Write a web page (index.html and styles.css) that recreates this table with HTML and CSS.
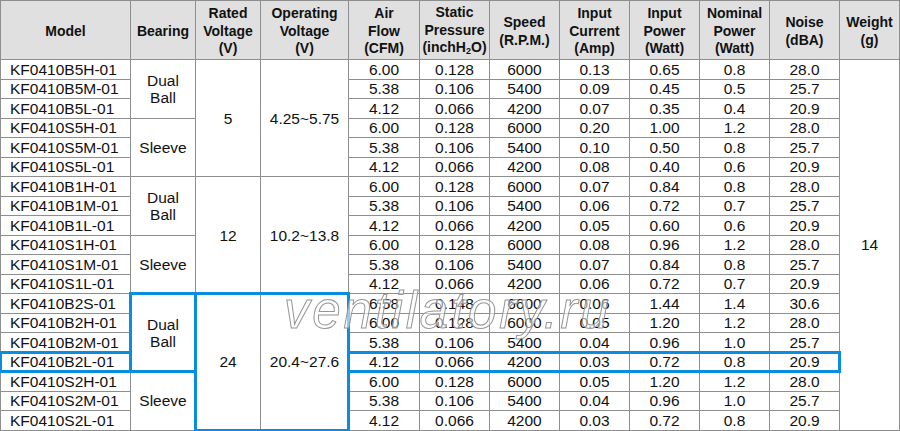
FILE: index.html
```html
<!DOCTYPE html>
<html>
<head>
<meta charset="utf-8">
<link rel="stylesheet" href="styles.css">
</head>
<body>
<div class="sheet">
  <div class="h"><span>Model</span></div>
  <div class="h"><span>Bearing</span></div>
  <div class="h"><span>Rated<br>Voltage<br>(V)</span></div>
  <div class="h"><span>Operating<br>Voltage<br>(V)</span></div>
  <div class="h"><span>Air<br>Flow<br>(CFM)</span></div>
  <div class="h"><span>Static<br>Pressure<br>(inchH<span class="sub">2</span>O)</span></div>
  <div class="h"><span>Speed<br>(R.P.M.)</span></div>
  <div class="h"><span>Input<br>Current<br>(Amp)</span></div>
  <div class="h"><span>Input<br>Power<br>(Watt)</span></div>
  <div class="h"><span>Nominal<br>Power<br>(Watt)</span></div>
  <div class="h"><span>Noise<br>(dBA)</span></div>
  <div class="h"><span>Weight<br>(g)</span></div>

  <div class="c m">KF0410B5H-01</div><div class="c s3"><span>Dual<br>Ball</span></div><div class="c s6">5</div><div class="c s6">4.25~5.75</div><div class="c">6.00</div><div class="c">0.128</div><div class="c">6000</div><div class="c">0.13</div><div class="c">0.65</div><div class="c">0.8</div><div class="c">28.0</div><div class="c s19">14</div>
  <div class="c m">KF0410B5M-01</div><div class="c">5.38</div><div class="c">0.106</div><div class="c">5400</div><div class="c">0.09</div><div class="c">0.45</div><div class="c">0.5</div><div class="c">25.7</div>
  <div class="c m">KF0410B5L-01</div><div class="c">4.12</div><div class="c">0.066</div><div class="c">4200</div><div class="c">0.07</div><div class="c">0.35</div><div class="c">0.4</div><div class="c">20.9</div>
  <div class="c m">KF0410S5H-01</div><div class="c s3">Sleeve</div><div class="c">6.00</div><div class="c">0.128</div><div class="c">6000</div><div class="c">0.20</div><div class="c">1.00</div><div class="c">1.2</div><div class="c">28.0</div>
  <div class="c m">KF0410S5M-01</div><div class="c">5.38</div><div class="c">0.106</div><div class="c">5400</div><div class="c">0.10</div><div class="c">0.50</div><div class="c">0.8</div><div class="c">25.7</div>
  <div class="c m">KF0410S5L-01</div><div class="c">4.12</div><div class="c">0.066</div><div class="c">4200</div><div class="c">0.08</div><div class="c">0.40</div><div class="c">0.6</div><div class="c">20.9</div>

  <div class="c m">KF0410B1H-01</div><div class="c s3"><span>Dual<br>Ball</span></div><div class="c s6">12</div><div class="c s6">10.2~13.8</div><div class="c">6.00</div><div class="c">0.128</div><div class="c">6000</div><div class="c">0.07</div><div class="c">0.84</div><div class="c">0.8</div><div class="c">28.0</div>
  <div class="c m">KF0410B1M-01</div><div class="c">5.38</div><div class="c">0.106</div><div class="c">5400</div><div class="c">0.06</div><div class="c">0.72</div><div class="c">0.7</div><div class="c">25.7</div>
  <div class="c m">KF0410B1L-01</div><div class="c">4.12</div><div class="c">0.066</div><div class="c">4200</div><div class="c">0.05</div><div class="c">0.60</div><div class="c">0.6</div><div class="c">20.9</div>
  <div class="c m">KF0410S1H-01</div><div class="c s3">Sleeve</div><div class="c">6.00</div><div class="c">0.128</div><div class="c">6000</div><div class="c">0.08</div><div class="c">0.96</div><div class="c">1.2</div><div class="c">28.0</div>
  <div class="c m">KF0410S1M-01</div><div class="c">5.38</div><div class="c">0.106</div><div class="c">5400</div><div class="c">0.07</div><div class="c">0.84</div><div class="c">0.8</div><div class="c">25.7</div>
  <div class="c m">KF0410S1L-01</div><div class="c">4.12</div><div class="c">0.066</div><div class="c">4200</div><div class="c">0.06</div><div class="c">0.72</div><div class="c">0.7</div><div class="c">20.9</div>

  <div class="c m">KF0410B2S-01</div><div class="c s4"><span>Dual<br>Ball</span></div><div class="c s7">24</div><div class="c s7">20.4~27.6</div><div class="c">6.58</div><div class="c">0.148</div><div class="c">6600</div><div class="c">0.06</div><div class="c">1.44</div><div class="c">1.4</div><div class="c">30.6</div>
  <div class="c m">KF0410B2H-01</div><div class="c">6.00</div><div class="c">0.128</div><div class="c">6000</div><div class="c">0.05</div><div class="c">1.20</div><div class="c">1.2</div><div class="c">28.0</div>
  <div class="c m">KF0410B2M-01</div><div class="c">5.38</div><div class="c">0.106</div><div class="c">5400</div><div class="c">0.04</div><div class="c">0.96</div><div class="c">1.0</div><div class="c">25.7</div>
  <div class="c m">KF0410B2L-01</div><div class="c">4.12</div><div class="c">0.066</div><div class="c">4200</div><div class="c">0.03</div><div class="c">0.72</div><div class="c">0.8</div><div class="c">20.9</div>
  <div class="c m">KF0410S2H-01</div><div class="c s3">Sleeve</div><div class="c">6.00</div><div class="c">0.128</div><div class="c">6000</div><div class="c">0.05</div><div class="c">1.20</div><div class="c">1.2</div><div class="c">28.0</div>
  <div class="c m">KF0410S2M-01</div><div class="c">5.38</div><div class="c">0.106</div><div class="c">5400</div><div class="c">0.04</div><div class="c">0.96</div><div class="c">1.0</div><div class="c">25.7</div>
  <div class="c m">KF0410S2L-01</div><div class="c">4.12</div><div class="c">0.066</div><div class="c">4200</div><div class="c">0.03</div><div class="c">0.72</div><div class="c">0.8</div><div class="c">20.9</div>

  <div class="hl hl-model"></div>
  <div class="hl hl-bearing"></div>
  <div class="hl hl-voltage"></div>
  <div class="hl hl-row"></div>

  <div class="watermark">ventilatory.ru</div>
</div>
</body>
</html>
```

FILE: styles.css
```css
html, body {
  margin: 0;
  padding: 0;
  background: #ffffff;
}

.sheet {
  position: relative;
  display: grid;
  grid-template-columns: 129px 64px 64px 87px 70px repeat(6, 69px) 59px;
  grid-template-rows: 58px repeat(19, 18.5px);
  gap: 1px;
  padding: 1px;
  width: 898px;
  background: #8e8e8e;
  font-family: "Liberation Sans", Arial, sans-serif;
  color: #111111;
}

.h {
  background: #e0e0e0;
  display: flex;
  align-items: center;
  justify-content: center;
  text-align: center;
  font-weight: bold;
  font-size: 14px;
  line-height: 17.5px;
  padding-top: 3px;
}

.sub {
  font-size: 9px;
  position: relative;
  top: 2px;
}

.c {
  background: #ffffff;
  display: flex;
  align-items: center;
  justify-content: center;
  text-align: center;
  font-size: 15.5px;
  line-height: 17px;
  white-space: nowrap;
}

.m {
  justify-content: flex-start;
  padding-left: 9px;
}

.s3 { grid-row: span 3; }
.s4 { grid-row: span 4; }
.s6 { grid-row: span 6; }
.s7 { grid-row: span 7; }
.s19 { grid-row: span 19; }

.hl {
  position: absolute;
  top: -2px;
  bottom: -2px;
  left: -2px;
  right: -2px;
  border: 3px solid #0a8ddf;
  pointer-events: none;
  z-index: 1;
}

.hl-model { grid-column: 1 / 2; grid-row: 17 / 18; }
.hl-bearing { grid-column: 2 / 3; grid-row: 14 / 18; }
.hl-voltage { grid-column: 3 / 5; grid-row: 14 / 21; }
.hl-row { grid-column: 5 / 12; grid-row: 17 / 18; }

.watermark {
  position: absolute;
  left: 284px;
  top: 281px;
  font-family: "Liberation Sans", Arial, sans-serif;
  font-style: italic;
  font-size: 51px;
  line-height: 60px;
  letter-spacing: 2.8px;
  color: rgba(255, 255, 255, 0.55);
  -webkit-text-stroke: 1px #959595;
  z-index: 2;
  pointer-events: none;
  white-space: nowrap;
}
```
